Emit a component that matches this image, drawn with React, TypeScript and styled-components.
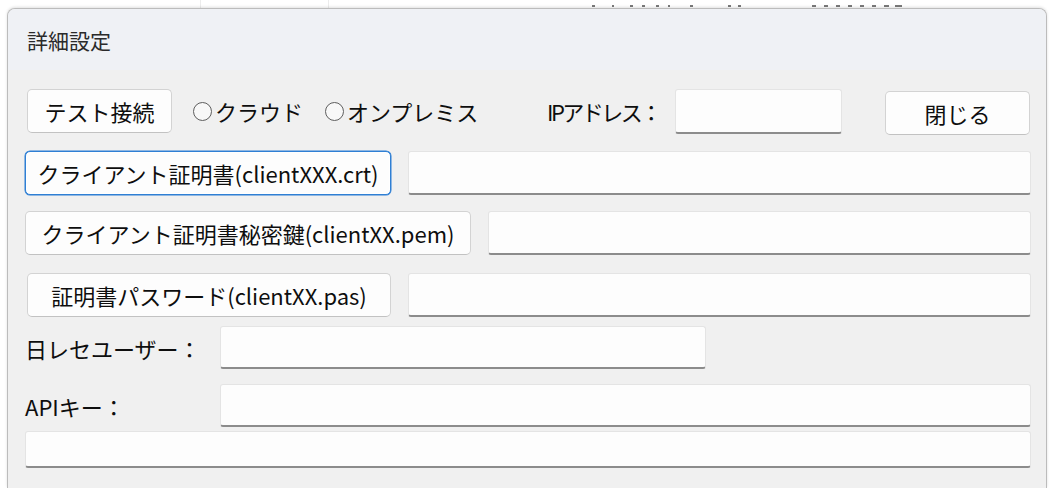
import React from "react";
import styled, { createGlobalStyle } from "styled-components";

const GlobalStyle = createGlobalStyle`
  html, body {
    margin: 0;
    padding: 0;
    background: #ffffff;
  }
  body {
    font-family: "Noto Sans CJK JP", "Noto Sans", sans-serif;
    overflow: hidden;
  }
`;

const FONT = `"Noto Sans CJK JP", "Noto Sans", sans-serif`;

const Screen = styled.div`
  width: 1049px;
  height: 488px;
  display: flex;
  flex-direction: column;
  background: #ffffff;
  overflow: hidden;
`;

/* strip of the window behind the dialog */
const Backdrop = styled.svg`
  display: block;
  flex: none;
  width: 1049px;
  height: 8px;
`;

const Window = styled.div`
  flex: 1;
  margin: 0 2px 0 7px;
  display: flex;
  flex-direction: column;
  background: #f0f0f0;
  border: 1px solid #bcbcbc;
  border-bottom: none;
  border-radius: 8px 8px 0 0;
  overflow: hidden;
  box-shadow: 0 -1px 3px rgba(0, 0, 0, 0.12);
`;

const TitleBar = styled.div`
  height: 61px;
  flex: none;
  display: flex;
  align-items: center;
  padding-left: 19px;
  background: #eff1f5;
  font: 21px ${FONT};
  color: #2a2a2a;
`;

const Body = styled.div`
  display: flex;
  flex-direction: column;
  padding: 0 15px 0 17px;
`;

const Row = styled.div<{ $top: number; $height?: number }>`
  display: flex;
  align-items: center;
  margin-top: ${(p) => p.$top}px;
  ${(p) => (p.$height ? `height: ${p.$height}px;` : "")}
`;

const PushButton = styled.button<{ $w: number; $indent?: number; $focused?: boolean }>`
  flex: none;
  box-sizing: border-box;
  width: ${(p) => p.$w}px;
  height: 44px;
  margin-left: ${(p) => p.$indent ?? 0}px;
  padding: 0;
  display: flex;
  align-items: center;
  justify-content: center;
  background: #fdfdfd;
  border: 1px solid ${(p) => (p.$focused ? "#2f7fd4" : "#d3d3d3")};
  border-bottom-color: ${(p) => (p.$focused ? "#2f7fd4" : "#c2c2c2")};
  border-radius: 5px;
  box-shadow: ${(p) => (p.$focused ? "inset 0 0 0 1px #ffffff, 0 0 0 0.5px #2f7fd4" : "none")};
  font: 22px/1 ${FONT};
  color: #0e0e0e;
  white-space: nowrap;
`;

const CloseButton = styled(PushButton)`
  margin-left: auto;
  margin-right: 1px;
  align-self: flex-end;
`;

const RadioOption = styled.label<{ $w: number; $indent?: number }>`
  flex: none;
  display: flex;
  align-items: center;
  width: ${(p) => p.$w}px;
  margin-left: ${(p) => p.$indent ?? 0}px;
  font: 22px/1 ${FONT};
  color: #0e0e0e;
  white-space: nowrap;
`;

const RadioDot = styled.span`
  flex: none;
  box-sizing: border-box;
  width: 19px;
  height: 19px;
  margin-right: 3px;
  border: 1.5px solid #5e5e5e;
  border-radius: 50%;
  background: #f8f8f8;
`;

const FieldLabel = styled.span<{ $w: number; $tight?: boolean }>`
  flex: none;
  width: ${(p) => p.$w}px;
  font: 22px/1 ${FONT};
  letter-spacing: ${(p) => (p.$tight ? "-2.5px" : "0")};
  color: #0e0e0e;
  white-space: nowrap;
`;

const TextField = styled.input<{ $w?: number; $h?: number; $gap?: number }>`
  ${(p) => (p.$w ? `flex: none; width: ${p.$w}px;` : "flex: 1; min-width: 0;")}
  box-sizing: border-box;
  height: ${(p) => p.$h ?? 44}px;
  margin-left: ${(p) => p.$gap ?? 0}px;
  padding: 0 8px;
  background: #fdfdfd;
  border: 1px solid #e4e4e4;
  border-bottom: 2px solid #8c8c8c;
  border-radius: 3px;
  font: 20px ${FONT};
  outline: none;
`;

const backdropTicks: Array<[number, number]> = [
  [200, 1], [328, 1], [592, 3], [612, 2], [630, 3], [642, 3], [656, 3], [668, 2],
  [690, 3], [728, 3], [738, 3], [812, 4], [824, 4], [836, 4], [848, 4], [860, 4],
  [872, 4], [884, 5], [895, 7],
];

export default function App() {
  return (
    <>
      <GlobalStyle />
      <Screen>
        <Backdrop viewBox="0 0 1049 8" aria-hidden>
          {backdropTicks.map(([x, w], i) => (
            <rect
              key={i}
              x={x}
              y={i < 2 ? 0 : 5}
              width={w}
              height={i < 2 ? 8 : 2}
              fill={i < 2 ? "#ececec" : "#7a7a7a"}
            />
          ))}
        </Backdrop>
        <Window>
          <TitleBar>詳細設定</TitleBar>
          <Body>
            <Row $top={17} $height={48}>
              <PushButton $w={145} $indent={2}>
                テスト接続
              </PushButton>
              <RadioOption $w={132} $indent={21}>
                <RadioDot />
                クラウド
              </RadioOption>
              <RadioOption $w={222}>
                <RadioDot />
                オンプレミス
              </RadioOption>
              <FieldLabel $w={128} $tight>
                IPアドレス：
              </FieldLabel>
              <TextField $w={167} $h={45} readOnly />
              <CloseButton $w={145}>閉じる</CloseButton>
            </Row>
            <Row $top={16}>
              <PushButton $w={366} $focused>
                クライアント証明書(clientXXX.crt)
              </PushButton>
              <TextField $gap={17} readOnly />
            </Row>
            <Row $top={16}>
              <PushButton $w={446}>クライアント証明書秘密鍵(clientXX.pem)</PushButton>
              <TextField $gap={17} readOnly />
            </Row>
            <Row $top={18}>
              <PushButton $w={364} $indent={2}>
                証明書パスワード(clientXX.pas)
              </PushButton>
              <TextField $gap={17} readOnly />
            </Row>
            <Row $top={9}>
              <FieldLabel $w={195}>日レセユーザー：</FieldLabel>
              <TextField $w={486} $h={43} readOnly />
            </Row>
            <Row $top={15}>
              <FieldLabel $w={195}>APIキー：</FieldLabel>
              <TextField $h={43} readOnly />
            </Row>
            <Row $top={4}>
              <TextField $h={37} readOnly />
            </Row>
          </Body>
        </Window>
      </Screen>
    </>
  );
}
